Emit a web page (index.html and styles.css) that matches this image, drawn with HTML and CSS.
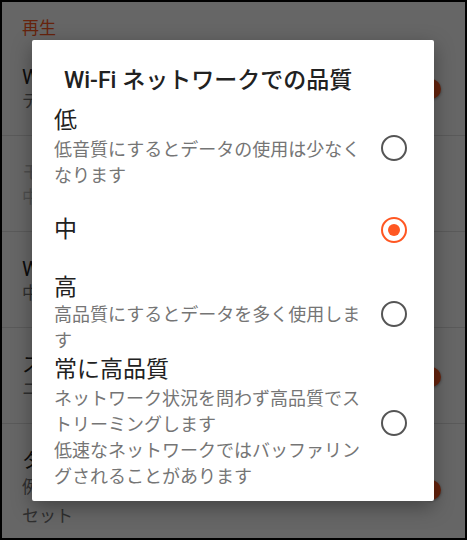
FILE: index.html
```html
<!DOCTYPE html>
<html lang="ja">
<head>
<meta charset="utf-8">
<title>Wi-Fi ネットワークでの品質</title>
<link rel="stylesheet" href="styles.css">
</head>
<body>
<div class="screen">
  <div class="settings">
    <div class="section-header">再生</div>
    <div class="pref">
      <div class="pref-text">
        <div class="pref-title">Wi-Fi 接続時のみストリーミング</div>
        <div class="pref-summary">データ通信量を節約します</div>
      </div>
      <div class="switch"><span class="thumb"></span></div>
    </div>
    <div class="pref pref-disabled">
      <div class="pref-text">
        <div class="pref-title">モバイル ネットワークでの品質</div>
        <div class="pref-summary">中</div>
      </div>
    </div>
    <div class="pref">
      <div class="pref-text">
        <div class="pref-title">Wi-Fi ネットワークでの品質</div>
        <div class="pref-summary">中</div>
      </div>
    </div>
    <div class="pref">
      <div class="pref-text">
        <div class="pref-title">ストリーミング時にキャッシュ</div>
        <div class="pref-summary">ニューリリースを自動保存</div>
      </div>
      <div class="switch"><span class="thumb"></span></div>
    </div>
    <div class="pref pref-last">
      <div class="pref-text">
        <div class="pref-title">タイマーを使用</div>
        <div class="pref-summary">例: 再生を自動的に停止するタイマーを<br>セット</div>
      </div>
      <div class="switch"><span class="thumb"></span></div>
    </div>
  </div>

  <div class="scrim"></div>

  <div class="dialog">
    <div class="dialog-title">Wi-Fi ネットワークでの品質</div>
    <div class="option option-low">
      <div class="option-text">
        <div class="option-label">低</div>
        <div class="option-desc">低音質にするとデータの使用は少なくなります</div>
      </div>
      <span class="radio"></span>
    </div>
    <div class="option option-mid">
      <div class="option-text">
        <div class="option-label">中</div>
      </div>
      <span class="radio radio-checked"></span>
    </div>
    <div class="option option-high">
      <div class="option-text">
        <div class="option-label">高</div>
        <div class="option-desc">高品質にするとデータを多く使用します</div>
      </div>
      <span class="radio"></span>
    </div>
    <div class="option option-max">
      <div class="option-text">
        <div class="option-label">常に高品質</div>
        <div class="option-desc option-desc-gap">ネットワーク状況を問わず高品質でストリーミングします<br>低速なネットワークではバッファリングされることがあります</div>
      </div>
      <span class="radio"></span>
    </div>
  </div>
</div>
</body>
</html>
```
FILE: styles.css
```css
* { box-sizing: border-box; }
html, body { margin: 0; padding: 0; background: #000; }
body {
  font-family: Roboto, "Noto Sans CJK JP", "Noto Sans", sans-serif;
}
.screen {
  position: relative;
  width: 467px;
  height: 540px;
  border: 2px solid #000;
  background: #fff;
  overflow: hidden;
}
.settings { display: flex; flex-direction: column; }
.section-header {
  padding: 14px 20px 0;
  font-size: 17px;
  line-height: 24px;
  color: #ff5722;
}
.pref {
  display: flex;
  align-items: center;
  gap: 16px;
  padding: 25px 27px 22px 20px;
  border-bottom: 1px solid #e0e0e0;
}
.pref-last { border-bottom: none; }
.pref-text { flex: 1; min-width: 0; }
.pref-title {
  font-size: 20px;
  line-height: 24px;
  color: #212121;
  white-space: nowrap;
}
.pref-summary {
  font-size: 17px;
  line-height: 24px;
  color: #757575;
  white-space: nowrap;
}
.pref-last .pref-summary { line-height: 29px; }
.pref-disabled .pref-title,
.pref-disabled .pref-summary { color: #c4c4c4; }
.switch {
  flex: none;
  width: 34px;
  height: 14px;
  border-radius: 7px;
  background: #ffab91;
  display: flex;
  align-items: center;
  justify-content: flex-end;
}
.thumb {
  flex: none;
  width: 20px;
  height: 20px;
  border-radius: 50%;
  background: #ff5722;
  margin-right: -3px;
  box-shadow: 0 1px 3px rgba(0,0,0,0.4);
}
.scrim {
  position: absolute;
  inset: 0;
  background: rgba(0, 0, 0, 0.6);
}
.dialog {
  position: absolute;
  left: 30px;
  top: 38px;
  width: 402px;
  background: #fff;
  border-radius: 2px;
  box-shadow: 0 6px 20px rgba(0,0,0,0.35);
  padding: 26px 27px 11px 22px;
}
.dialog-title {
  padding-left: 10px;
  font-size: 23px;
  line-height: 30px;
  font-weight: 500;
  color: #212121;
  white-space: nowrap;
}
.option {
  display: flex;
  align-items: center;
  gap: 16px;
}
.option-low { margin-top: 11px; }
.option-mid { margin-top: 27px; }
.option-high { margin-top: 30px; }
.option-max { margin-top: 2px; }
.option-text { flex: 1; min-width: 0; }
.option-label {
  font-size: 23px;
  line-height: 28px;
  color: #212121;
}
.option-low .option-desc { margin-top: 2px; }
.option-desc {
  font-size: 18px;
  line-height: 26px;
  color: #757575;
}
.option-desc-gap { margin-top: 2px; }
.radio {
  flex: none;
  width: 26px;
  height: 26px;
  border-radius: 50%;
  border: 2.5px solid #555;
  display: flex;
  align-items: center;
  justify-content: center;
}
.radio-checked { border-color: #ff5722; }
.radio-checked::after {
  content: "";
  width: 12px;
  height: 12px;
  border-radius: 50%;
  background: #ff5722;
}
```
